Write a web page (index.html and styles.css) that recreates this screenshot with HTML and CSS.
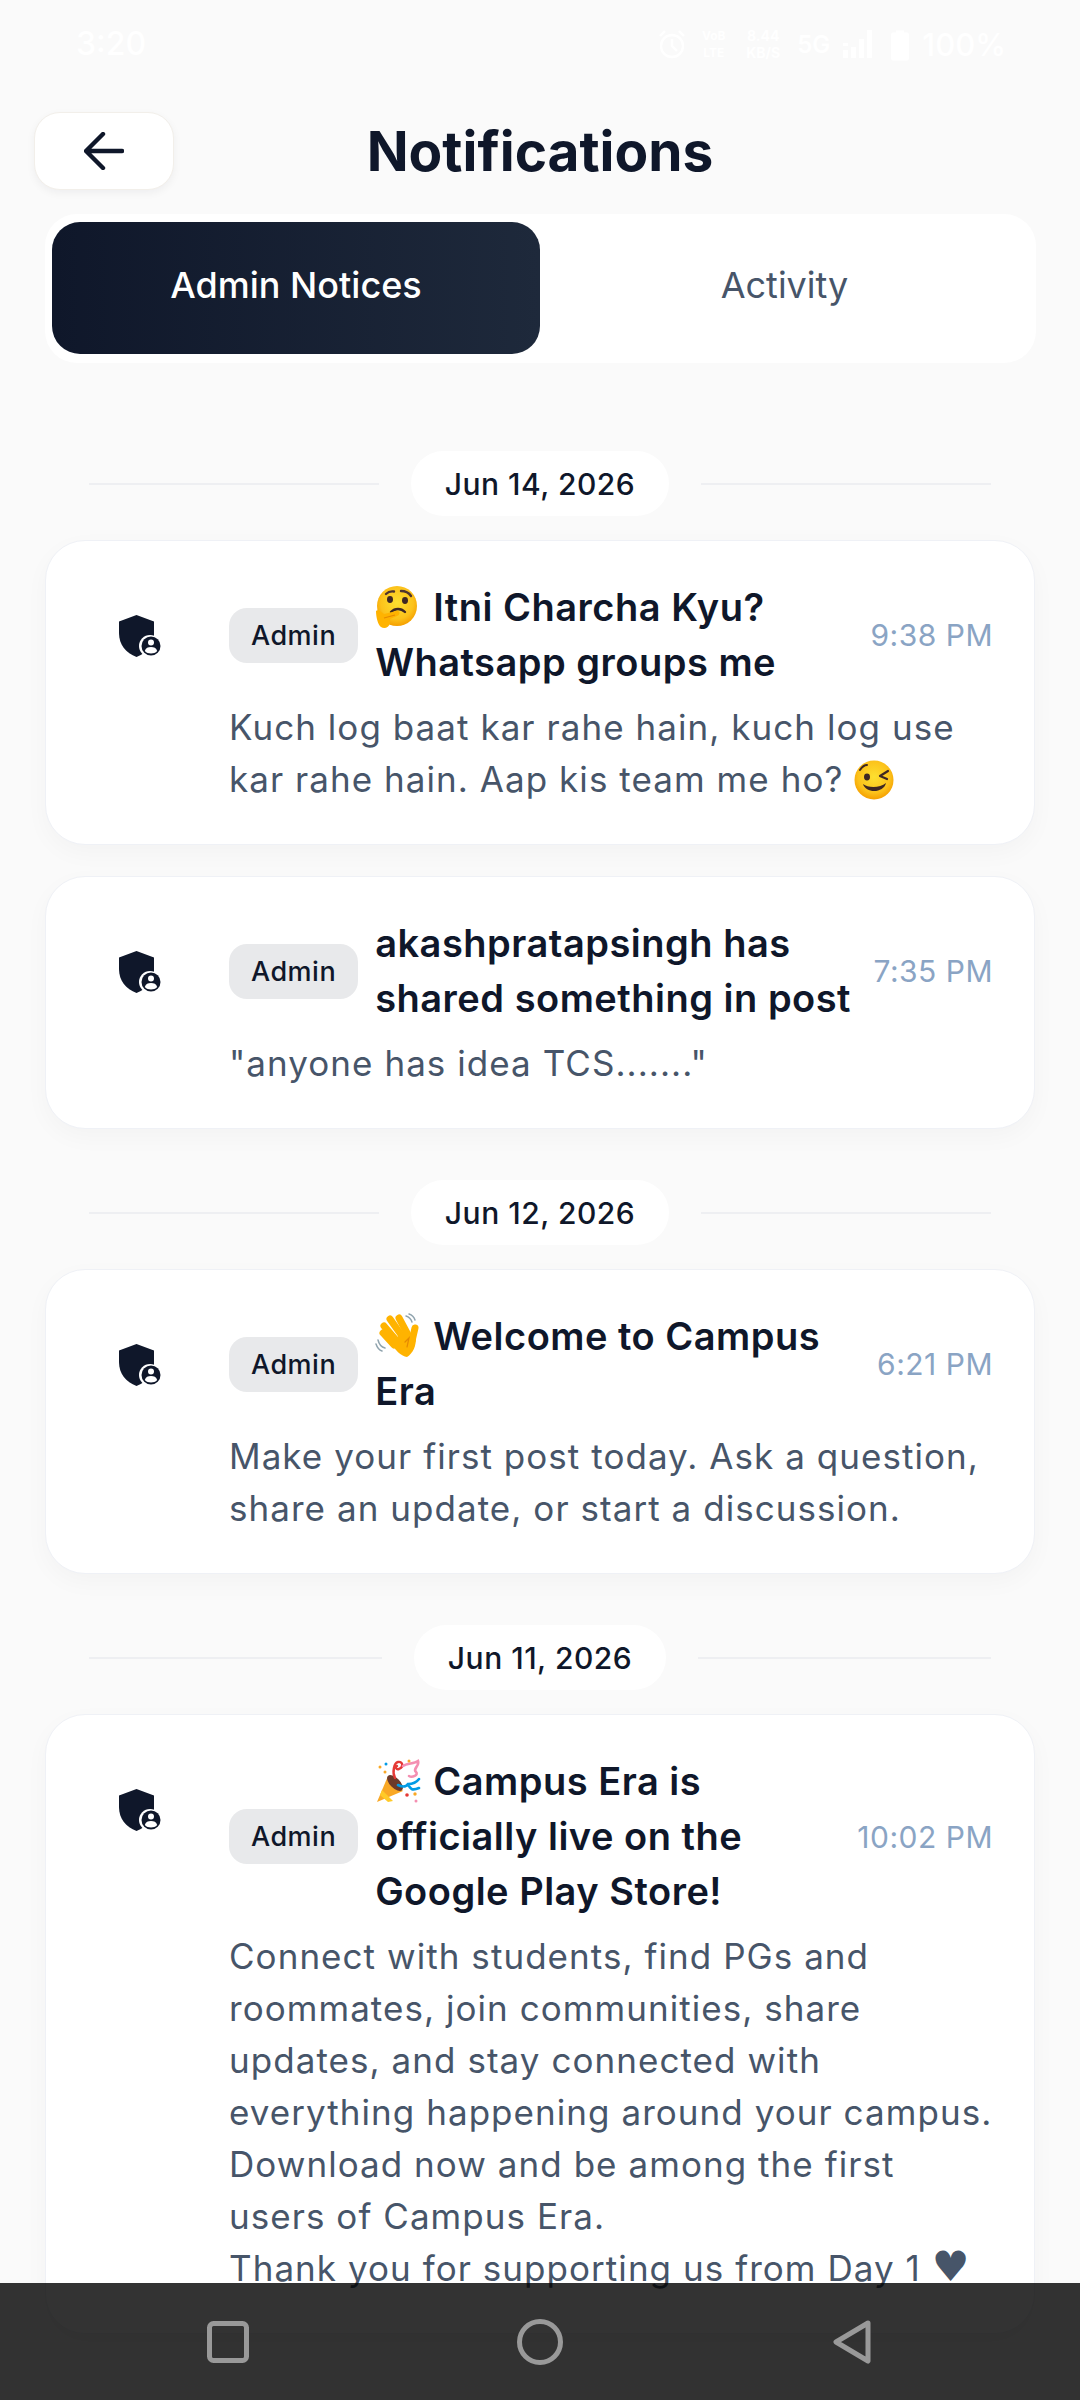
FILE: index.html
```html
<!DOCTYPE html>
<html lang="en">
<head>
<meta charset="utf-8">
<title>Notifications</title>
<link rel="stylesheet" href="styles.css">
</head>
<body>
<div class="screen">
  <svg width="0" height="0" class="defs">
    <defs>
      <radialGradient id="faceGrad" cx="50%" cy="42%" r="58%">
        <stop offset="0%" stop-color="#fde030"/>
        <stop offset="70%" stop-color="#fcc21b"/>
        <stop offset="100%" stop-color="#f59f00"/>
      </radialGradient>
    </defs>
    <symbol id="shield" viewBox="0 0 42 42">
      <path d="M17.5 0 L35 6.5 V20 C35 30 28 38 17.5 42 C7 38 0 30 0 18 V6.5 Z" fill="#0f172a"/>
      <circle cx="31" cy="31" r="11" fill="#fff"/>
      <circle cx="32" cy="31" r="9.5" fill="#0f172a"/>
      <circle cx="32" cy="27.5" r="3" fill="#fff"/>
      <path d="M25.8 36 C26.8 32.8 29 32 32 32 C35 32 37.2 32.8 38.2 36 C36.5 37.8 34.5 38.5 32 38.5 C29.5 38.5 27.5 37.8 25.8 36 Z" fill="#fff"/>
    </symbol>
    <symbol id="think" viewBox="0 0 48 46">
      <circle cx="22" cy="22" r="20" fill="url(#faceGrad)"/>
      <path d="M11 10 C13 8 16 7 19 7.5 M26 7 C30 7 34 9 36 12" stroke="#4e342e" stroke-width="2.4" stroke-linecap="round" fill="none"/>
      <ellipse cx="15" cy="15.5" rx="3" ry="3.4" fill="#3e2723"/>
      <ellipse cx="30" cy="16.5" rx="3" ry="3.4" fill="#3e2723"/>
      <path d="M16 28 C20 24 26 24 30 28" stroke="#3e2723" stroke-width="2.4" fill="none" stroke-linecap="round"/>
      <path d="M1 27 C3 25 6 28 9 30 L21 27 C25 26 26 31 22 32 L15 35 L15 39 C14 44 9 45 6 43 C3 41 1 33 1 27 Z" fill="#ffb300"/>
      <path d="M9 34 L20 31" stroke="#e68a00" stroke-width="1.2" fill="none"/>
    </symbol>
    <symbol id="wink" viewBox="0 0 40 40">
      <circle cx="20" cy="20" r="19.5" fill="url(#faceGrad)"/>
      <ellipse cx="13" cy="17" rx="3" ry="3.4" fill="#3e2723"/>
      <path d="M6 10 C8 7 10 5 13 5" stroke="#3e2723" stroke-width="2" fill="none" stroke-linecap="round"/>
      <path d="M34 11 L26 16 L33 19" stroke="#3e2723" stroke-width="2.2" fill="none" stroke-linecap="round" stroke-linejoin="round"/>
      <path d="M9 24 C14 28 26 28 32 23 C30 33 12 34 9 24 Z" fill="#3e2723"/>
    </symbol>
    <symbol id="wave" viewBox="0 0 46 46">
      <path d="M30 3 C33 4 35 6 36 9 M33 1 C36 2 38 4 39 7" stroke="#90a4ae" stroke-width="1.5" fill="none" stroke-linecap="round"/>
      <path d="M2 27 C3 31 5 34 9 35 M0 31 C1 34 3 37 6 38" stroke="#90a4ae" stroke-width="1.5" fill="none" stroke-linecap="round"/>
      <g stroke="#ffb300" stroke-width="7" stroke-linecap="round">
        <path d="M7 20 L18 32"/><path d="M8 13 L20 27"/><path d="M14 6 L26 23"/><path d="M23 5 L31 20"/>
        <path d="M39 15 L36 28"/>
      </g>
      <path d="M15 30 L30 16 L40 24 C40 34 37 40 31 44 C25 43 20 38 15 30 Z" fill="#ffb300"/>
      <path d="M29 29 L33 25 L31 34" stroke="#e68a00" stroke-width="1.2" fill="none" stroke-linecap="round"/>
    </symbol>
    <symbol id="party" viewBox="0 0 46 46">
      <path d="M1 44 L12 18 L27 33 Z" fill="#f9a825"/>
      <path d="M6 32 L17 43 L12 44 L4 37 Z" fill="#ffca28"/>
      <ellipse cx="19" cy="25" rx="5" ry="10" transform="rotate(-45 19 25)" fill="#6d3a2a"/>
      <path d="M19 20 C16 14 18 5 22 4 C27 3 28 9 23 11 C20 12 19 9 21 8" stroke="#e53935" stroke-width="2.4" fill="none" stroke-linecap="round"/>
      <path d="M27 8 C31 5 38 6 42 3 C44 8 36 11 40 14 C43 17 36 20 33 18" stroke="#f48fb1" stroke-width="2.6" fill="none" stroke-linecap="round"/>
      <path d="M22 27 C26 29 30 29 32 26 C35 26 40 25 43 21 M32 26 C34 31 36 33 43 30" stroke="#039be5" stroke-width="2.6" fill="none" stroke-linecap="round"/>
      <circle cx="4" cy="9" r="1.5" fill="#f9a825"/><circle cx="10" cy="6" r="1.5" fill="#039be5"/><circle cx="9" cy="14" r="1.5" fill="#f9a825"/>
      <circle cx="33" cy="3" r="1.5" fill="#f9a825"/><circle cx="31" cy="37" r="1.8" fill="#e53935"/><circle cx="39" cy="36" r="1.7" fill="#f9a825"/><circle cx="40" cy="43" r="1.5" fill="#f48fb1"/>
    </symbol>
  </svg>

  <div class="statusbar">
    <span class="clock">3:20</span>
    <div class="status-right">
      <svg class="st-alarm" viewBox="0 0 28 30"><circle cx="14" cy="17" r="11" fill="none" stroke="#fff" stroke-width="2.4"/><path d="M14 10 V17 L19 22 M2 7 L7 2 M26 7 L21 2" stroke="#fff" stroke-width="2.4" fill="none"/></svg>
      <span class="st-stack st-lte"><span>VoB</span><span>LTE</span></span>
      <span class="st-stack st-speed"><span>8.44</span><span>KB/S</span></span>
      <span class="st-5g">5G</span>
      <svg class="st-signal" viewBox="0 0 32 30"><path d="M2 14h5v3H2zM2 21h5v8H2zM10 18h5v11h-5zM18 10h5v19h-5zM26 1h5v28h-5z" fill="#fff"/></svg>
      <svg class="st-batt" viewBox="0 0 18 32"><path d="M5 2h8v2h3a2 2 0 0 1 2 2v24a2 2 0 0 1-2 2H2a2 2 0 0 1-2-2V6a2 2 0 0 1 2-2h3z" fill="#fff"/></svg>
      <span class="st-pct">100%</span>
    </div>
  </div>

  <header class="topbar">
    <button class="back" type="button" aria-label="Back">
      <svg viewBox="0 0 40 38" class="back-icon"><path d="M38 19 H3 M19 2 L2 19 L19 36" fill="none" stroke="#0f172a" stroke-width="4.4" stroke-linecap="round" stroke-linejoin="round"/></svg>
    </button>
    <h1 class="title">Notifications</h1>
  </header>

  <nav class="tabs">
    <div class="tab tab-active">Admin Notices</div>
    <div class="tab">Activity</div>
  </nav>

  <main class="feed">
    <div class="date-row"><span class="rule"></span><span class="date-pill">Jun 14, 2026</span><span class="rule"></span></div>

    <article class="card">
      <div class="icon-col"><svg class="shield"><use href="#shield"/></svg></div>
      <div class="content">
        <div class="head">
          <span class="badge">Admin</span>
          <div class="card-title"><svg class="emoji"><use href="#think"/></svg> Itni Charcha Kyu? Whatsapp groups me</div>
          <span class="time">9:38 PM</span>
        </div>
        <p class="body">Kuch log baat kar rahe hain, kuch log use kar rahe hain. Aap kis team me ho? <svg class="emoji-sm"><use href="#wink"/></svg></p>
      </div>
    </article>

    <article class="card">
      <div class="icon-col"><svg class="shield"><use href="#shield"/></svg></div>
      <div class="content">
        <div class="head">
          <span class="badge">Admin</span>
          <div class="card-title">akashpratapsingh has shared something in post</div>
          <span class="time">7:35 PM</span>
        </div>
        <p class="body">"anyone has idea TCS......."</p>
      </div>
    </article>

    <div class="date-row"><span class="rule"></span><span class="date-pill">Jun 12, 2026</span><span class="rule"></span></div>

    <article class="card">
      <div class="icon-col"><svg class="shield"><use href="#shield"/></svg></div>
      <div class="content">
        <div class="head">
          <span class="badge">Admin</span>
          <div class="card-title"><svg class="emoji"><use href="#wave"/></svg> Welcome to Campus Era</div>
          <span class="time">6:21 PM</span>
        </div>
        <p class="body">Make your first post today. Ask a question, share an update, or start a discussion.</p>
      </div>
    </article>

    <div class="date-row"><span class="rule"></span><span class="date-pill">Jun 11, 2026</span><span class="rule"></span></div>

    <article class="card">
      <div class="icon-col"><svg class="shield"><use href="#shield"/></svg></div>
      <div class="content">
        <div class="head">
          <span class="badge">Admin</span>
          <div class="card-title"><svg class="emoji"><use href="#party"/></svg> Campus Era is officially live on the Google Play Store!</div>
          <span class="time">10:02 PM</span>
        </div>
        <p class="body">Connect with students, find PGs and roommates, join communities, share updates, and stay connected with everything happening around your campus.<br>Download now and be among the first users of Campus Era.<br>Thank you for supporting us from Day 1 <span class="heart">♥</span></p>
      </div>
    </article>
  </main>

  <div class="navbar">
    <svg class="nav-icon nav-recent" viewBox="0 0 42 42"><rect x="2.5" y="2.5" width="37" height="37" rx="4" fill="none" stroke="#999" stroke-width="5"/></svg>
    <svg class="nav-icon nav-home" viewBox="0 0 46 46"><circle cx="23" cy="23" r="20.5" fill="none" stroke="#999" stroke-width="5"/></svg>
    <svg class="nav-icon nav-back" viewBox="0 0 38 44"><path d="M35 3 L3 22 L35 41 Z" fill="none" stroke="#999" stroke-width="5" stroke-linejoin="round"/></svg>
  </div>
</div>
</body>
</html>
```
FILE: styles.css
```css
* { box-sizing: border-box; }
html, body { margin: 0; padding: 0; }
body { background: #fafafa; font-family: "Inter", "Liberation Sans", sans-serif; }
.defs { display: block; height: 0; width: 0; overflow: hidden; }
.screen { position: relative; width: 1080px; height: 2400px; overflow: hidden; background: #fafafa; }

.statusbar { height: 112px; padding: 24px 74px 0 76px; display: flex; justify-content: space-between; align-items: flex-start; color: #fff; }
.clock { font-size: 32px; line-height: 40px; font-weight: 500; }
.status-right { display: flex; align-items: center; height: 40px; }
.st-alarm { width: 28px; height: 30px; margin-right: 14px; }
.st-stack { display: flex; flex-direction: column; font-size: 15px; line-height: 17px; font-weight: 700; align-items: center; }
.st-lte { width: 27px; margin-right: 17px; font-size: 12px; }
.st-speed { width: 38px; margin-right: 15px; font-size: 14px; }
.st-5g { font-size: 24px; font-weight: 600; margin-right: 11px; }
.st-signal { width: 32px; height: 30px; margin-right: 18px; }
.st-batt { width: 18px; height: 33px; margin-right: 13px; }
.st-pct { font-size: 31px; font-weight: 500; }

.topbar { position: relative; height: 78px; padding-left: 34px; display: flex; align-items: center; }
.back { width: 140px; height: 78px; border: 1px solid #f2efea; border-radius: 26px; background: #fff; box-shadow: 0 3px 8px rgba(15, 23, 42, 0.05); padding: 0; display: flex; align-items: center; justify-content: center; }
.back-icon { width: 40px; height: 38px; }
.title { position: absolute; left: 0; right: 0; top: 0; margin: 0; text-align: center; font-size: 55px; line-height: 78px; font-weight: 700; color: #0f172a; }

.tabs { margin: 24px 44px 0 45px; height: 149px; padding: 8px 7px 9px; background: #fff; border-radius: 32px; display: flex; }
.tab { flex: 1; display: flex; align-items: center; justify-content: center; padding-bottom: 6px; font-size: 36px; font-weight: 400; color: #475569; }
.tab-active { flex: 0 0 488px; color: #fff; font-weight: 500; border-radius: 28px; background: linear-gradient(90deg, #0f172a, #1e293b); }

.feed { padding: 0 45px; display: flex; flex-direction: column; }
.date-row { display: flex; align-items: center; justify-content: center; height: 65px; margin: 51px 44px 24px; }
.date-row:first-child { margin-top: 88px; }
.rule { flex: 1; height: 2px; background: #eeeff2; }
.date-pill { margin: 0 32px; height: 65px; padding: 0 34px; display: flex; align-items: center; border-radius: 33px; background: #fff; font-size: 30px; letter-spacing: 0.5px; font-weight: 500; color: #0f172a; }

.card { display: flex; padding: 39px 41px; background: #fff; border: 1px solid #eff1f6; border-radius: 40px; box-shadow: 0 8px 24px rgba(15, 23, 42, 0.03); }
.card + .card { margin-top: 31px; }
.icon-col { flex: 0 0 106px; margin-right: 36px; padding-top: 35px; display: flex; justify-content: center; align-items: flex-start; }
.shield { width: 42px; height: 42px; }
.content { flex: 1; min-width: 0; }
.head { display: flex; align-items: center; gap: 17px; }
.badge { flex: none; height: 55px; padding: 0 22px; display: flex; align-items: center; border-radius: 18px; background: #e8e9eb; font-size: 27px; letter-spacing: 0.5px; font-weight: 500; color: #0f172a; }
.card-title { flex: 1; min-width: 0; font-size: 38px; letter-spacing: 0.5px; line-height: 55px; font-weight: 600; color: #0f172a; }
.time { flex: none; font-size: 30px; letter-spacing: 0.5px; color: #8aa4c4; }
.body { margin: 11px 0 0; font-size: 35px; letter-spacing: 1.05px; line-height: 52px; color: #475569; }
.emoji { width: 48px; height: 46px; vertical-align: -9px; }
.emoji-sm { width: 40px; height: 40px; vertical-align: -8px; }
.heart { font-family: "DejaVu Sans", sans-serif; font-size: 42px; line-height: 0; }

.navbar { position: absolute; left: 0; right: 0; bottom: 0; height: 117px; background: rgba(0, 0, 0, 0.8); display: grid; grid-template-columns: repeat(3, 312px); justify-content: center; justify-items: center; align-items: center; }
.nav-recent { width: 42px; height: 42px; }
.nav-home { width: 46px; height: 46px; }
.nav-back { width: 38px; height: 44px; }
```
